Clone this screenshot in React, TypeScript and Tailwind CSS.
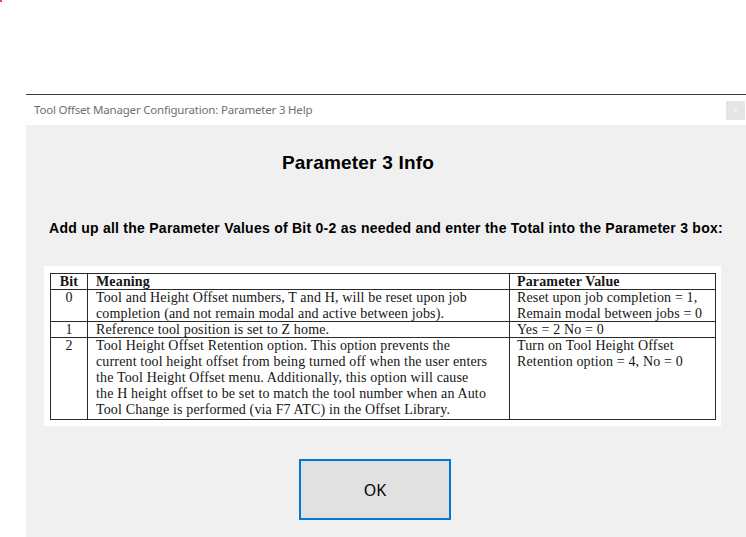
const rows = [
  {
    bit: "0",
    meaning: [
      "Tool and Height Offset numbers, T and H, will be reset upon job",
      "completion (and not remain modal and active between jobs).",
    ],
    value: ["Reset upon job completion = 1,", "Remain modal between jobs = 0"],
    h: "h-[32px]",
  },
  {
    bit: "1",
    meaning: ["Reference tool position is set to Z home."],
    value: ["Yes = 2 No = 0"],
    h: "h-[16px]",
  },
  {
    bit: "2",
    meaning: [
      "Tool Height Offset Retention option. This option prevents the",
      "current tool height offset from being turned off when the user enters",
      "the Tool Height Offset menu. Additionally, this option will cause",
      "the H height offset to be set to match the tool number when an Auto",
      "Tool Change is performed (via F7 ATC) in the Offset Library.",
    ],
    value: ["Turn on Tool Height Offset", "Retention option = 4, No = 0"],
    h: "h-[82px]",
  },
];

const cell = "border-r border-b border-[#2a2a2a] overflow-visible whitespace-nowrap";

export default function App() {
  return (
    <div className="relative w-[746px] h-[537px] bg-white overflow-hidden pt-[94px] pl-[26px]">
      <div className="absolute left-0 top-0 w-[2px] h-[2px] bg-[#f24040]" />
      <div className="w-[720px] h-[443px] flex flex-col border-t border-[#3c3c3c]">
        {/* title bar */}
        <div className="h-[30px] bg-white flex items-center justify-between pl-[8px] pr-[1px]">
          <span className="text-[11.5px] text-[#707070] font-['Noto_Sans',sans-serif] tracking-[-0.2px]">
            Tool Offset Manager Configuration: Parameter 3 Help
          </span>
          <div className="w-[19px] h-[19px] bg-[#e5e5e5] flex items-center justify-center text-[10px] text-[#f4f4f4] font-['DejaVu_Sans',sans-serif] leading-none">
            x
          </div>
        </div>

        {/* body */}
        <div className="flex-1 bg-[#f0f0f0] flex flex-col items-center font-['Liberation_Sans',Arial,sans-serif]">
          <h1 className="mt-[27px] w-full pr-[56px] text-center text-[19px] tracking-[0.2px] font-bold leading-[22px] text-black">
            Parameter 3 Info
          </h1>
          <p className="mt-[46px] text-[14px] tracking-[0.25px] font-bold leading-[16px] text-black whitespace-nowrap">
            Add up all the Parameter Values of Bit 0-2 as needed and enter the Total into the Parameter 3 box:
          </p>

          <div className="mt-[30px] self-start ml-[18px] w-[677px] h-[160px] bg-white pt-[7px] pl-[6px]">
            <div className="w-[666px] grid grid-cols-[37px_422px_1fr] border-l border-t border-[#2a2a2a] font-['Liberation_Serif',serif] text-[14px] tracking-[0.15px] leading-[16px] text-[#151515]">
              <div className={`${cell} h-[16px] text-center font-bold`}>Bit</div>
              <div className={`${cell} h-[16px] pl-[8px] font-bold`}>Meaning</div>
              <div className={`${cell} h-[16px] pl-[7px] font-bold`}>Parameter Value</div>
              {rows.map((r) => (
                <div key={r.bit} className="contents">
                  <div className={`${cell} ${r.h} text-center`}>{r.bit}</div>
                  <div className={`${cell} ${r.h} pl-[8px]`}>
                    {r.meaning.map((l) => (
                      <div key={l}>{l}</div>
                    ))}
                  </div>
                  <div className={`${cell} ${r.h} pl-[7px]`}>
                    {r.value.map((l) => (
                      <div key={l}>{l}</div>
                    ))}
                  </div>
                </div>
              ))}
            </div>
          </div>

          <button className="mt-[33px] ml-[-22px] w-[152px] h-[61px] bg-[#e1e1e1] border-2 border-[#0078d7] text-[16px] text-black font-['Noto_Sans',sans-serif]">
            OK
          </button>
        </div>
      </div>
    </div>
  );
}
